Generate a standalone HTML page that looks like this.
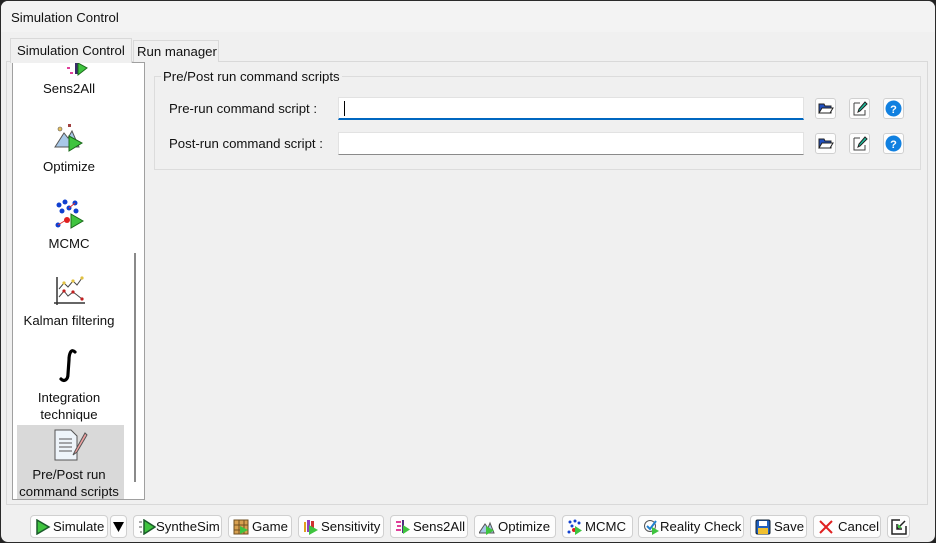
<!DOCTYPE html>
<html><head><style>
*{box-sizing:border-box;margin:0;padding:0}
body{width:936px;height:543px;overflow:hidden;background:#222;font-family:"Liberation Sans",sans-serif;font-size:13.2px;color:#111}
.win{position:absolute;left:0;top:0;width:936px;height:543px;background:#f0f0f0;border:1px solid #2a2a2a;border-radius:8px;overflow:hidden}
.title{position:absolute;left:0;top:0;width:100%;height:31px;background:#f3f3f3}
.a{position:absolute}
.tab{position:absolute;border:1px solid #d9d9d9;border-bottom:none;background:#f0f0f0;padding:3px 0 0 3px;white-space:nowrap}
.panel{position:absolute;left:5px;top:60px;width:922px;height:444px;border:1px solid #d9d9d9;background:#f0f0f0}
.list{position:absolute;left:11px;top:61px;width:133px;height:438px;border:1px solid #a0a0a0;background:#fff;overflow:hidden}
.item{position:absolute;left:0;width:112px;text-align:center;line-height:17px}
.grp{position:absolute;left:153px;top:75px;width:767px;height:94px;border:1px solid #dcdcdc}
.edit{position:absolute;left:337px;width:466px;height:23px;background:#fff;border:1px solid #e2e2e2;border-bottom:1px solid #8a8a8a}
.sb{position:absolute;width:21px;height:21px;background:#fdfdfd;border:1px solid #d0d0d0;border-radius:3px}
.btn{position:absolute;top:514px;height:23px;background:#fdfdfd;border:1px solid #d0d0d0;border-radius:4px;white-space:nowrap;line-height:22px;padding-left:22px}
.btn svg{position:absolute;left:4px;top:3px}
</style></head><body>
<div class="win">
<div class="title"></div>
<div class="a" style="left:10px;top:9px">Simulation Control</div>
<div class="panel"></div>
<div class="tab" style="left:132px;top:39px;width:86px;height:22px">Run manager</div>
<div class="tab" style="left:9px;top:37px;width:122px;height:25px;background:#f0f0f0;z-index:2;padding:4px 0 0 6px">Simulation Control</div>
<div class="list">
  <div class="a" style="left:121px;top:190px;width:2px;height:229px;background:#8a8a8a"></div>
  <svg class="a" style="left:46px;top:0" width="30" height="14"><rect x="8" y="4" width="3" height="2" fill="#e0409a"/><rect x="11" y="9" width="3" height="2" fill="#e0409a"/><rect x="16" y="0" width="3" height="11" fill="#3a2a6a"/><path d="M19 0 L28 5 L19 12Z" fill="#3fc43f" stroke="#1a6a1a"/></svg>
  <div class="item" style="top:17px">Sens2All</div>
  <svg class="a" style="left:34px;top:60px" width="40" height="30"><circle cx="13" cy="6" r="2" fill="#e7c060" stroke="#555" stroke-width=".6"/><rect x="21" y="1" width="3" height="3" fill="#a04040"/><path d="M8 24 L17 10 L21 15 L25 8 L32 24Z" fill="#a8c8e8" stroke="#555"/><path d="M22 13 L35 20 L22 28Z" fill="#3fc43f" stroke="#1a6a1a"/></svg>
  <div class="item" style="top:95px">Optimize</div>
  <svg class="a" style="left:40px;top:135px" width="34" height="34"><g fill="#1040d0"><circle cx="6" cy="7" r="2.5"/><circle cx="12" cy="4" r="2.5"/><circle cx="22" cy="5" r="2.5"/><circle cx="9" cy="13" r="2.5"/><circle cx="16" cy="10" r="2.5"/><circle cx="23" cy="13" r="2.5"/><circle cx="5" cy="27" r="2.5"/></g><path d="M5 27 L13 22 M16 10 L22 5" stroke="#e03030"/><circle cx="14" cy="22" r="3" fill="#e02020"/><path d="M18 16 L30 23 L18 30Z" fill="#3fc43f" stroke="#1a6a1a"/></svg>
  <div class="item" style="top:172px">MCMC</div>
  <svg class="a" style="left:40px;top:212px" width="34" height="32"><path d="M4 2 V30 M1 28 H32" stroke="#333" stroke-width="1.5" fill="none"/><path d="M6 14 L11 8 L15 12 L20 6 L24 10 L29 3" stroke="#444" fill="none"/><path d="M6 22 L11 16 L15 21 L20 17 L24 20 L29 24" stroke="#444" fill="none"/><g fill="#e0c040"><circle cx="11" cy="8" r="1.6"/><circle cx="20" cy="6" r="1.6"/><circle cx="29" cy="3" r="1.6"/></g><g fill="#c02020"><circle cx="11" cy="16" r="1.6"/><circle cx="20" cy="17" r="1.6"/><circle cx="29" cy="24" r="1.6"/></g></svg>
  <div class="item" style="top:249px">Kalman filtering</div>
  <svg class="a" style="left:44px;top:285px" width="26" height="36"><path d="M18 4 C14 0 12 6 12 12 L11 26 C11 32 7 34 4 31" stroke="#000" stroke-width="3.2" fill="none" stroke-linecap="round"/></svg>
  <div class="item" style="top:326px">Integration<br>technique</div>
  <div class="a" style="left:4px;top:362px;width:107px;height:75px;background:#d9d9d9"></div>
  <svg class="a" style="left:40px;top:366px" width="36" height="32"><path d="M2 1 H18 L24 7 V31 H2Z" fill="#eef4fa" stroke="#555"/><path d="M6 10 H19 M6 14 H19 M6 18 H19 M6 22 H19" stroke="#555"/><path d="M32 4 L22 22 L20 26 L24 23 L34 6Z" fill="#f0a0a0" stroke="#555"/></svg>
  <div class="item" style="top:403px">Pre/Post run<br>command scripts</div>
</div>
<div class="grp"></div>
<div class="a" style="left:160px;top:68px;background:#f0f0f0;padding:0 2px">Pre/Post run command scripts</div>
<div class="a" style="left:168px;top:100px">Pre-run command script :</div>
<div class="a" style="left:168px;top:135px">Post-run command script :</div>
<div class="edit" style="top:96px;border-bottom:2px solid #0067c0"><div class="a" style="left:5px;top:3px;width:1px;height:15px;background:#000"></div></div>
<div class="edit" style="top:131px"></div>
<div class="sb" style="left:814px;top:97px"><svg width="19" height="19"><path d="M3 5 H8 L9 7 H15 V14 H3Z" fill="#2050c0" stroke="#222"/><path d="M3 14 L6 9 H17 L14 14Z" fill="#fff" stroke="#222"/></svg></div>
<div class="sb" style="left:848px;top:97px"><svg width="19" height="19"><path d="M4 4 H10 M4 4 V16 H15 V11" stroke="#444" fill="none"/><path d="M8 13 L9 10 L15 3 L17 5 L10 12Z" fill="#20c0a0" stroke="#222"/></svg></div>
<div class="sb" style="left:882px;top:97px"><svg width="19" height="19"><circle cx="9.5" cy="9.5" r="8" fill="#1080e0"/><text x="9.5" y="14" font-size="11" font-weight="bold" fill="#fff" text-anchor="middle" font-family="Liberation Sans">?</text></svg></div>
<div class="sb" style="left:814px;top:132px"><svg width="19" height="19"><path d="M3 5 H8 L9 7 H15 V14 H3Z" fill="#2050c0" stroke="#222"/><path d="M3 14 L6 9 H17 L14 14Z" fill="#fff" stroke="#222"/></svg></div>
<div class="sb" style="left:848px;top:132px"><svg width="19" height="19"><path d="M4 4 H10 M4 4 V16 H15 V11" stroke="#444" fill="none"/><path d="M8 13 L9 10 L15 3 L17 5 L10 12Z" fill="#20c0a0" stroke="#222"/></svg></div>
<div class="sb" style="left:882px;top:132px"><svg width="19" height="19"><circle cx="9.5" cy="9.5" r="8" fill="#1080e0"/><text x="9.5" y="14" font-size="11" font-weight="bold" fill="#fff" text-anchor="middle" font-family="Liberation Sans">?</text></svg></div>

<div class="btn" style="left:29px;width:78px;padding-left:22px"><svg width="16" height="16"><path d="M2 1 L14 8 L2 15Z" fill="#3fc43f" stroke="#1a5a2a" stroke-width="1.5"/></svg>Simulate</div>
<div class="btn" style="left:109px;width:17px;padding:0"><svg width="12" height="12" style="left:2px;top:5px"><path d="M0 1 H11 L5.5 11Z" fill="#000"/></svg></div>
<div class="btn" style="left:132px;width:89px;padding-left:22px"><svg width="18" height="16"><path d="M1 3 H4 M1 8 H4 M2 13 H4" stroke="#555"/><path d="M6 1 L17 8 L6 15Z" fill="#3fc43f" stroke="#1a5a2a" stroke-width="1.5"/></svg>SyntheSim</div>
<div class="btn" style="left:227px;width:64px;padding-left:23px"><svg width="16" height="16"><rect x="1" y="1" width="14" height="14" fill="#d8a050" stroke="#705020"/><path d="M1 6 H15 M1 11 H15 M6 1 V15 M11 1 V15" stroke="#705020"/><path d="M7 7 L15 11 L7 15Z" fill="#3fc43f"/></svg>Game</div>
<div class="btn" style="left:297px;width:86px;padding-left:22px"><svg width="16" height="16"><rect x="1" y="3" width="2" height="10" fill="#e0a020"/><rect x="4" y="1" width="3" height="12" fill="#9040c0"/><rect x="8" y="2" width="3" height="11" fill="#d03030"/><path d="M6 6 L15 11 L6 16Z" fill="#3fc43f"/></svg>Sensitivity</div>
<div class="btn" style="left:389px;width:78px;padding-left:22px"><svg width="16" height="16"><path d="M1 3 H6 M2 7 H6 M1 11 H6" stroke="#e0409a" stroke-width="2"/><rect x="7" y="1" width="2" height="13" fill="#503080"/><path d="M8 6 L15 10.5 L8 15Z" fill="#3fc43f"/></svg>Sens2All</div>
<div class="btn" style="left:473px;width:82px;padding-left:23px"><svg width="16" height="16"><path d="M0 14 L6 5 L9 9 L11 4 L15 14Z" fill="#a8c8e8" stroke="#555"/><path d="M7 7 L15 11.5 L7 16Z" fill="#3fc43f"/></svg>Optimize</div>
<div class="btn" style="left:561px;width:71px;padding-left:22px"><svg width="16" height="16"><g fill="#1040d0"><circle cx="3" cy="3" r="1.5"/><circle cx="8" cy="2" r="1.5"/><circle cx="12" cy="4" r="1.5"/><circle cx="5" cy="7" r="1.5"/><circle cx="2" cy="13" r="1.5"/></g><circle cx="7" cy="11" r="2" fill="#e02020"/><path d="M8 7 L15 11.5 L8 16Z" fill="#3fc43f"/></svg>MCMC</div>
<div class="btn" style="left:637px;width:106px;padding-left:21px"><svg width="17" height="16"><circle cx="7" cy="7" r="5.5" fill="none" stroke="#555"/><path d="M4 7 L7 10 L13 2" stroke="#2080d0" stroke-width="2" fill="none"/><path d="M9 8 L16 12 L9 16Z" fill="#3fc43f"/></svg>Reality Check</div>
<div class="btn" style="left:749px;width:57px;padding-left:23px"><svg width="16" height="16"><rect x="1" y="1" width="14" height="14" rx="1.5" fill="#2060c0" stroke="#123"/><rect x="4" y="2" width="8" height="5" fill="#fff"/><rect x="3" y="9" width="10" height="6" fill="#f0c030"/></svg>Save</div>
<div class="btn" style="left:812px;width:68px;padding-left:24px"><svg width="16" height="16"><path d="M2 2 L14 14 M14 2 L2 14" stroke="#e02020" stroke-width="2"/></svg>Cancel</div>
<div class="btn" style="left:886px;width:23px;padding:0"><svg width="16" height="16" style="left:3px"><path d="M9 1 H1 V15 H15 V7" stroke="#222" stroke-width="1.5" fill="none"/><path d="M14 2 L6 10 M6 5 V10 H11" stroke="#222" stroke-width="1.5" fill="none"/><path d="M7 9 L11 9 L7 5Z" fill="#3fc43f"/></svg></div>
</div>
</body></html>
